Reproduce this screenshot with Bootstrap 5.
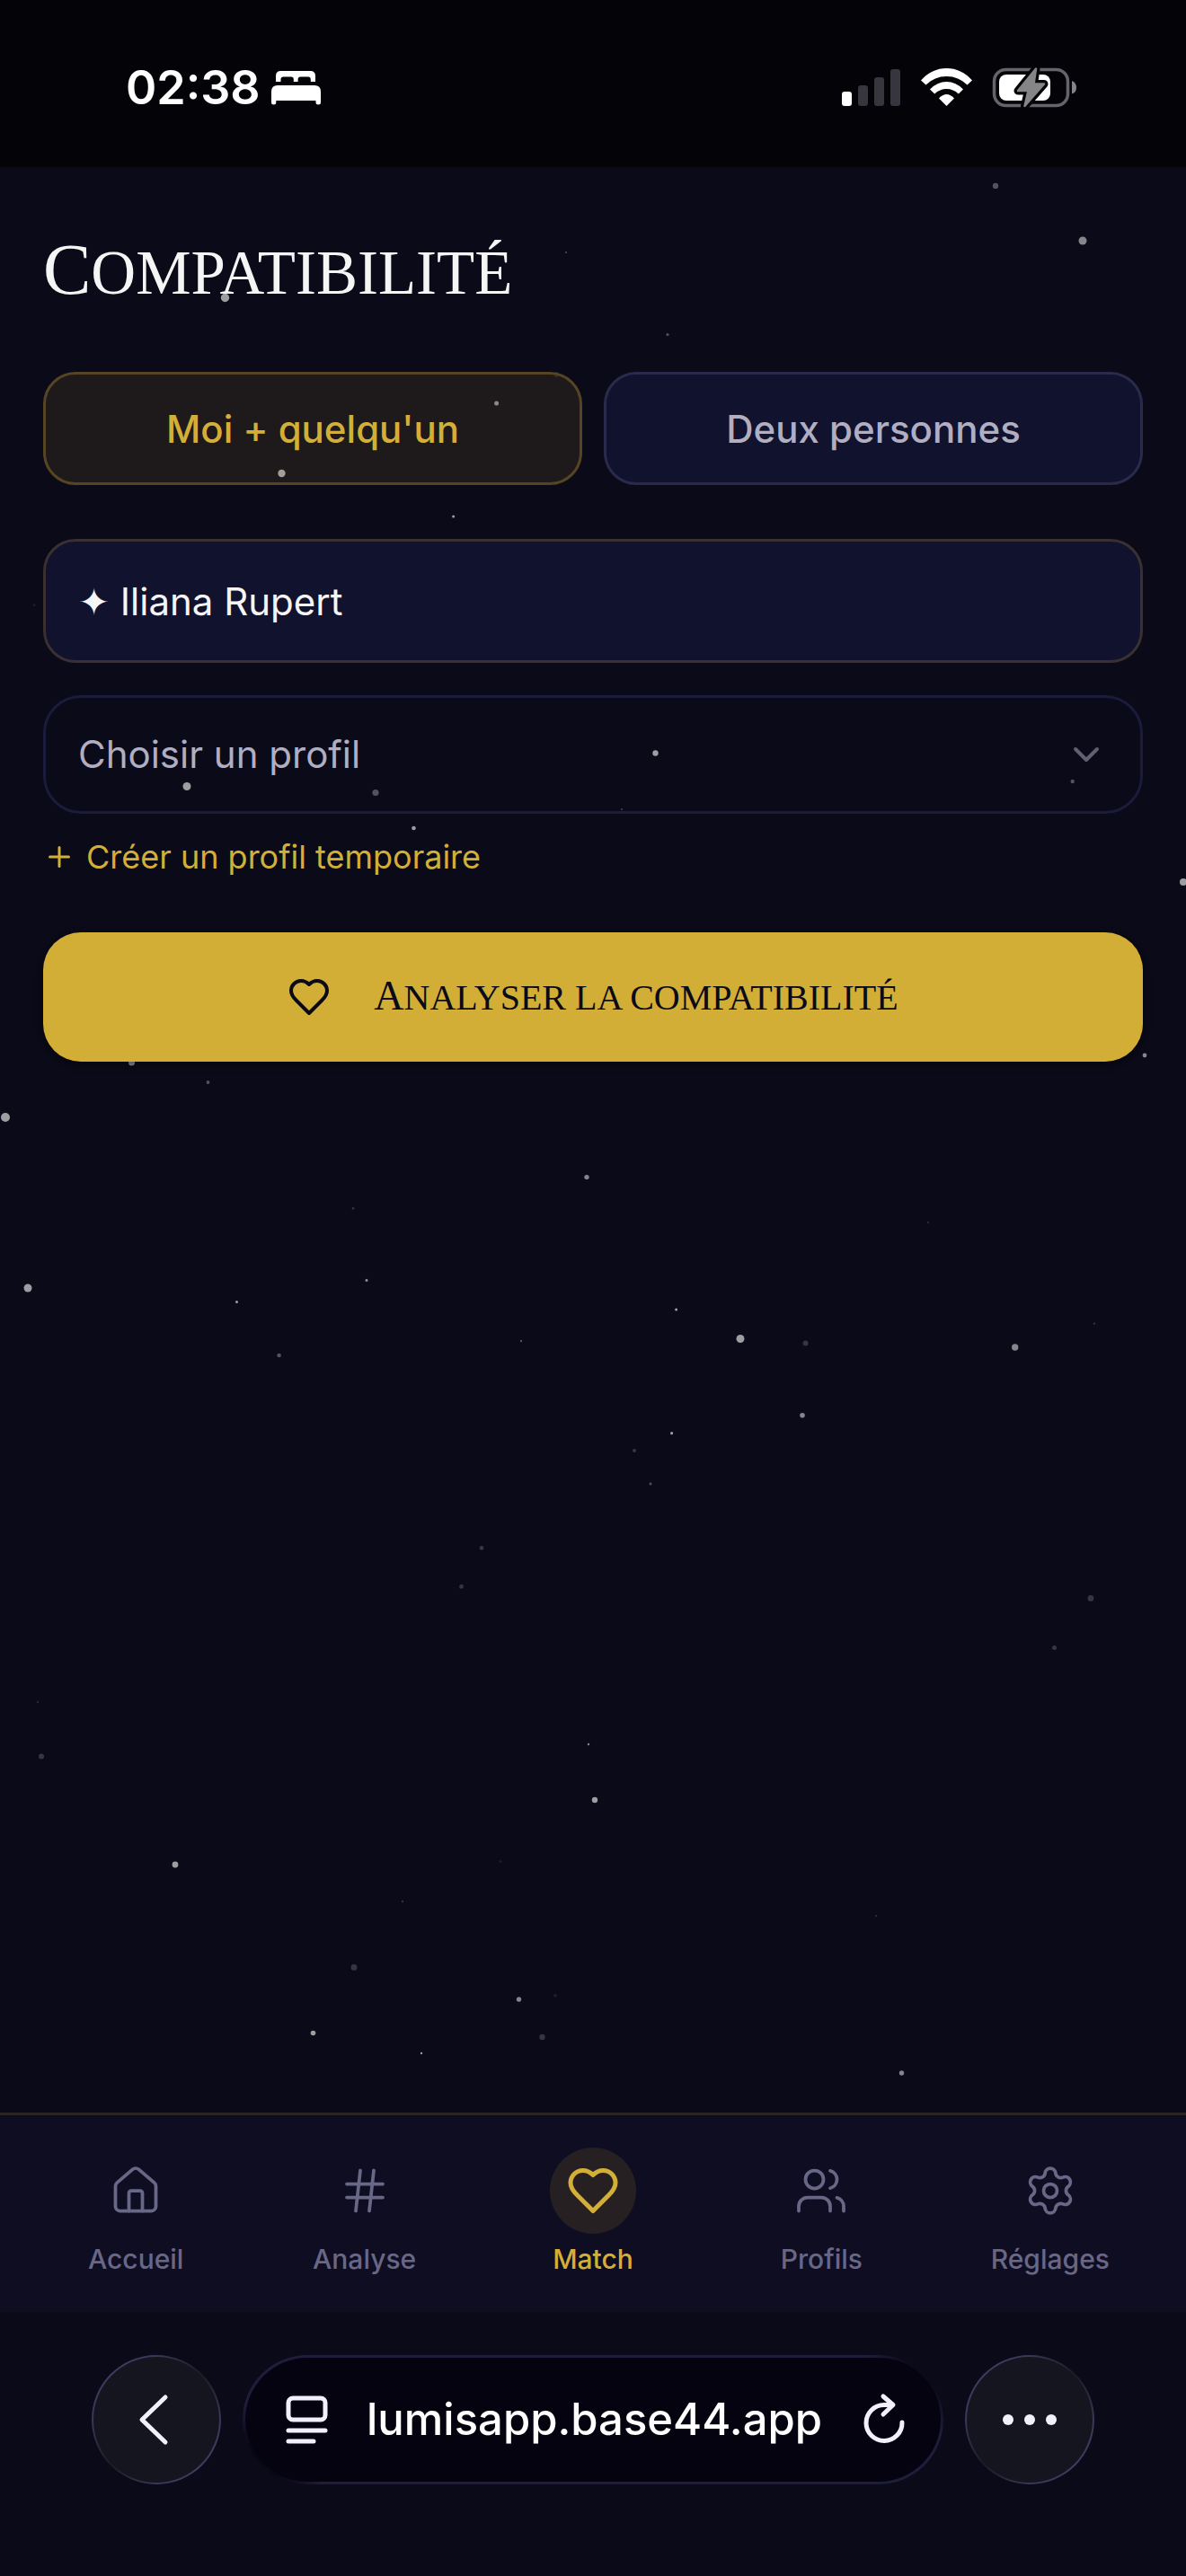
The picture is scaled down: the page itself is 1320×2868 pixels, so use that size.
<!DOCTYPE html>
<html lang="fr">
<head>
<meta charset="utf-8">
<meta name="viewport" content="width=device-width, initial-scale=1">
<title>Compatibilité</title>
<link href="https://cdn.jsdelivr.net/npm/bootstrap@5.3.0/dist/css/bootstrap.min.css" rel="stylesheet">
<style>
:root{--gold:#d4af37;--night:#0a0a18;--panel:#11122e;--muted:#696786;--soft:#b0aec0}
body{background:var(--night);color:#f5f5f5;font-family:Inter,"Liberation Sans",sans-serif;font-size:42px}
svg{display:block;flex:none}
.line-icon{fill:none;stroke:currentColor;stroke-linecap:round;stroke-linejoin:round}
.status-bar{height:186px;background:#030308;color:#fff;padding:10px 122px 0 140px}
.status-left{gap:12px}
.clock{font-size:52px;font-weight:600;line-height:64px}
.screen{padding:66px 48px}
.stars{position:absolute;inset:0;width:100%;height:100%;z-index:-1}
.engraved{font-family:"Liberation Serif",serif;font-weight:400;text-transform:uppercase}
.page-title{font-size:69px;line-height:96px;margin-bottom:62px}
.page-title::first-letter{font-size:80px}
.mode-btn{flex:1 1 0;height:126px;border:3px solid #2a2a4c;border-radius:36px;background:var(--panel);color:var(--soft);font-size:42px;font-weight:500}
.mode-btn.active,.mode-btn.active:hover{border-color:#564522;background:rgba(212,175,55,.1);color:var(--gold)}
.form-block{margin-top:60px}
.field{border:3px solid #3a3031;border-radius:36px;padding:0 36px;font-size:42px;line-height:60px;color:#f5f5f5}
.field:focus{box-shadow:none}
.field-me,.field-me:focus{height:138px;background:var(--panel);color:#f5f5f5}
.field-other,.field-other:focus{height:132px;margin-top:36px;border-color:#1b1b3d;border-radius:42px;color:var(--soft);background-color:transparent;background-image:url("data:image/svg+xml,%3Csvg xmlns='http://www.w3.org/2000/svg' viewBox='0 0 24 24' fill='none' stroke='%23625f72' stroke-width='2' stroke-linecap='round' stroke-linejoin='round'%3E%3Cpath d='m6 9 6 6 6-6'/%3E%3C/svg%3E");background-size:48px 48px;background-position:right 36px center}
.add-link{color:var(--gold);font-size:36px;line-height:48px;text-decoration:none;margin:24px 0 60px;gap:12px}
.cta,.cta:hover{height:144px;border:0;border-radius:42px;background:#d2ae36;color:var(--night);font-size:40px;line-height:48px;gap:48px;box-shadow:0 3px 9px rgba(0,0,0,.4)}
.cta-text::first-letter{font-size:46px}
.tab-bar{height:222px;border-top:3px solid #2a2524;background:#0f0d22;padding:36px 24px 0}
.tab-item{flex:1 1 0;gap:8px;color:var(--muted);font-size:30px;font-weight:500;line-height:40px;text-decoration:none}
.tab-item.active{color:var(--gold)}
.tab-disc{width:96px;height:96px;border-radius:50%}
.active .tab-disc{background:#272022}
.browser-bar{height:294px;padding:48px 102px 0;gap:24px}
.round-btn{flex:none;width:144px;height:144px;padding:0;border:2px solid transparent;border-radius:50%;color:#f2f0fc;background:linear-gradient(#15151f,#15151f) padding-box,linear-gradient(135deg,#45436c,#3a3858 25%,#1b1b26 50%,#3a3858 75%,#45436c) border-box}
.url-pill{height:144px;min-width:0;gap:42px;border:3px solid transparent;border-radius:72px;padding:0 39px 0 45px;background:linear-gradient(#04030f,#04030f) padding-box,radial-gradient(circle at 20px 124px,#06051280 0 20px,transparent 70px) border-box,radial-gradient(circle at calc(100% - 20px) 20px,#0a0a18 0 20px,transparent 70px) border-box,radial-gradient(circle at 20px 124px,#0a0a18 0 20px,transparent 70px) border-box,linear-gradient(#1f1d3c,#1f1d3c) border-box}
.plain-btn{flex:none;background:none;border:0;padding:0;color:#f2f0fc}
.url-text{flex:1 1 0;min-width:0;background:none;border:0;outline:0;padding:0;color:#fff;font-size:49px;font-weight:500;line-height:64px}
</style>
<script src="https://cdn.jsdelivr.net/npm/bootstrap@5.3.0/dist/js/bootstrap.bundle.min.js" defer></script>
</head>
<body class="d-flex flex-column min-vh-100">

<header class="status-bar d-flex justify-content-between align-items-center">
  <div class="status-left d-flex align-items-center">
    <span class="clock">02:38</span>
    <svg width="56" height="38" viewBox="0 0 56 38" fill="#fff" aria-label="Sommeil" role="img">
      <path d="M5 12V5.500Q5 0 10.500 0H43.500Q49 0 49 5.500V12H43.800V9.500Q43.800 6.500 41 6.500H32.500Q29.600 6.500 29.600 9.500V12H24.800V9.500Q24.800 6.500 22 6.500H13.500Q10.500 6.500 10.500 9.500V12Z"/>
      <path d="M0 23Q0 16 7 16H48Q55 16 55 23V35Q55 37.500 52.200 37.500Q49.500 37.500 49.500 35V33H5.300V35Q5.300 37.500 2.600 37.500Q0 37.500 0 35Z"/>
    </svg>
  </div>
  <svg width="262" height="46" viewBox="0 0 262 46" role="img" aria-label="Réseau, Wi-Fi et batterie">
    <rect x="1" y="27" width="11" height="16" rx="3" fill="#fff"/>
    <g fill="#37353d"><rect x="19" y="20" width="11" height="23" rx="3"/><rect x="37" y="11" width="11" height="32" rx="3"/><rect x="55" y="2" width="11" height="41" rx="3"/></g>
    <g fill="#fff">
      <path d="M89 14.500Q101 1 117.500 1T146 14.500L140.500 19.500Q131 10 117.500 10T94.500 19.500Z"/>
      <path d="M99 24.500Q107 16 117.500 16T136 24.500L130.800 29.500Q125 24 117.500 24T104.200 29.500Z"/>
      <path d="M109 34.500Q113 30 117.500 30T126 34.500L117.500 43Z"/>
    </g>
    <rect x="170.500" y="2.500" width="82" height="40" rx="13" fill="none" stroke="#66646a" stroke-width="3.500"/>
    <path d="M257 15Q262 17 262 22.500T257 29.500Z" fill="#858489"/>
    <rect x="176" y="8" width="57" height="29" rx="8" fill="#fff"/>
    <path d="M217 1.500L197 26H208.500L204.500 43L226 18.500H214.500Z" fill="#8b8a8e" stroke="#030308" stroke-width="9" stroke-linejoin="round"/>
    <path d="M217 1.500L197 26H208.500L204.500 43L226 18.500H214.500Z" fill="#858487" stroke="#858487" stroke-width="2.500" stroke-linejoin="round"/>
  </svg>
</header>

<main class="screen position-relative z-0 flex-grow-1">
  <svg class="stars" viewBox="0 186 1320 2166" preserveAspectRatio="xMidYMin slice" fill="#fff" aria-hidden="true">
    <g opacity=".6"><circle cx="250.500" cy="331.500" r="4.700"/><circle cx="208" cy="875.500" r="4.500"/><circle cx="1317" cy="982" r="4"/><circle cx="6" cy="1244" r="5"/><circle cx="31" cy="1434" r="4.500"/><circle cx="824" cy="1490.500" r="4.500"/><circle cx="729.500" cy="838.500" r="3.200"/><circle cx="662" cy="2004" r="3.200"/><circle cx="195" cy="2076" r="3.400"/><circle cx="348.500" cy="2263.500" r="2.800"/><circle cx="460.500" cy="922" r="2.300"/><circle cx="504.600" cy="575" r="1.500"/><circle cx="263.500" cy="1449.500" r="1.500"/><circle cx="752.600" cy="1458" r="1.500"/><circle cx="747.600" cy="1595.700" r="1.600"/><circle cx="469" cy="2286" r="1.200"/><circle cx="313.500" cy="527" r="4.200"/></g>
    <g opacity=".5"><circle cx="1205" cy="268" r="4.500"/><circle cx="146.500" cy="1183" r="3.500"/><circle cx="1274" cy="1175" r="2.400"/><circle cx="653" cy="1310.600" r="2.700"/><circle cx="1129.700" cy="1500" r="3.700"/><circle cx="893" cy="1575.800" r="2.800"/><circle cx="577.500" cy="2226" r="2.700"/><circle cx="1003.500" cy="2308" r="2.700"/><circle cx="408" cy="1425.400" r="1.600"/><circle cx="655" cy="1942" r="1.200"/><circle cx="552.600" cy="449" r="2.500"/></g>
    <g opacity=".3"><circle cx="1108" cy="207" r="3.200"/><circle cx="743" cy="372.500" r="1.600"/><circle cx="630" cy="281" r="1"/><circle cx="418" cy="882.500" r="3.600"/><circle cx="1193.700" cy="870" r="2.200"/><circle cx="580" cy="1493" r="1.200"/><circle cx="724" cy="1652" r="1.500"/><circle cx="231.500" cy="1205" r="1.900"/><circle cx="310.600" cy="1509" r="2.300"/></g>
    <g opacity=".18"><circle cx="1214" cy="1779.400" r="3.400"/><circle cx="1173.500" cy="1834.500" r="2.500"/><circle cx="394" cy="2190.400" r="3.400"/><circle cx="603.500" cy="2268" r="3.200"/><circle cx="46" cy="1955.600" r="3"/><circle cx="513.500" cy="1766.400" r="2.400"/><circle cx="536" cy="1723.500" r="2.400"/><circle cx="706" cy="1615" r="2"/><circle cx="896.600" cy="1495.400" r="3"/><circle cx="1218" cy="1473.600" r="1.200"/><circle cx="393" cy="1345.400" r="1.300"/><circle cx="1033" cy="1361" r="1"/><circle cx="692" cy="901" r="1.200"/><circle cx="448" cy="2117" r="1.200"/><circle cx="975" cy="2133" r="1"/><circle cx="42" cy="1895" r="1"/></g>
    <g opacity=".08"><circle cx="619.500" cy="417" r="3"/><circle cx="38" cy="673.500" r="1.600"/><circle cx="557" cy="2072.600" r="1.500"/><circle cx="618" cy="2221.700" r="2"/></g>
  </svg>

  <h1 class="page-title engraved">Compatibilité</h1>

  <div class="d-flex gap-4" role="group" aria-label="Mode">
    <button type="button" class="btn mode-btn active" aria-pressed="true">Moi + quelqu'un</button>
    <button type="button" class="btn mode-btn" aria-pressed="false">Deux personnes</button>
  </div>

  <form class="form-block">
    <input class="form-control field field-me" type="text" value="✦ Iliana Rupert" aria-label="Mon profil" readonly>
    <select class="form-select field field-other" aria-label="Profil à comparer">
      <option selected>Choisir un profil</option>
    </select>
    <a href="#" class="add-link d-inline-flex align-items-center">
      <svg class="line-icon" width="36" height="36" viewBox="0 0 24 24" stroke-width="2"><path d="M5 12h14M12 5v14"/></svg>
      Créer un profil temporaire
    </a>
    <button type="button" class="btn cta w-100 d-flex align-items-center justify-content-center">
      <svg class="line-icon" width="48" height="48" viewBox="0 0 24 24" stroke-width="2"><path d="M19 14c1.490-1.460 3-3.210 3-5.500A5.500 5.500 0 0 0 16.500 3c-1.760 0-3 .5-4.500 2-1.500-1.500-2.740-2-4.500-2A5.500 5.500 0 0 0 2 8.500c0 2.300 1.500 4.050 3 5.500l7 7Z"/></svg>
      <span class="cta-text engraved d-block">Analyser la compatibilité</span>
    </button>
  </form>
</main>

<nav class="tab-bar d-flex" aria-label="Navigation">
  <a href="#" class="tab-item d-flex flex-column align-items-center">
    <span class="tab-disc d-flex align-items-center justify-content-center"><svg class="line-icon" width="60" height="60" viewBox="0 0 24 24" stroke-width="1.500"><path d="M15 21v-8a1 1 0 0 0-1-1h-4a1 1 0 0 0-1 1v8"/><path d="M3 10a2 2 0 0 1 .709-1.528l7-5.999a2 2 0 0 1 2.582 0l7 5.999A2 2 0 0 1 21 10v9a2 2 0 0 1-2 2H5a2 2 0 0 1-2-2z"/></svg></span>
    Accueil
  </a>
  <a href="#" class="tab-item d-flex flex-column align-items-center">
    <span class="tab-disc d-flex align-items-center justify-content-center"><svg class="line-icon" width="60" height="60" viewBox="0 0 24 24" stroke-width="1.500"><path d="M4 9h16M4 15h16M10 3 8 21M16 3l-2 18"/></svg></span>
    Analyse
  </a>
  <a href="#" class="tab-item active d-flex flex-column align-items-center" aria-current="page">
    <span class="tab-disc d-flex align-items-center justify-content-center"><svg class="line-icon" width="60" height="60" viewBox="0 0 24 24" stroke-width="2"><path d="M19 14c1.490-1.460 3-3.210 3-5.500A5.500 5.500 0 0 0 16.500 3c-1.760 0-3 .5-4.500 2-1.500-1.500-2.740-2-4.500-2A5.500 5.500 0 0 0 2 8.500c0 2.300 1.500 4.050 3 5.500l7 7Z"/></svg></span>
    Match
  </a>
  <a href="#" class="tab-item d-flex flex-column align-items-center">
    <span class="tab-disc d-flex align-items-center justify-content-center"><svg class="line-icon" width="60" height="60" viewBox="0 0 24 24" stroke-width="1.500"><path d="M16 21v-2a4 4 0 0 0-4-4H6a4 4 0 0 0-4 4v2"/><circle cx="9" cy="7" r="4"/><path d="M22 21v-2a4 4 0 0 0-3-3.870M16 3.130a4 4 0 0 1 0 7.750"/></svg></span>
    Profils
  </a>
  <a href="#" class="tab-item d-flex flex-column align-items-center">
    <span class="tab-disc d-flex align-items-center justify-content-center"><svg class="line-icon" width="60" height="60" viewBox="0 0 24 24" stroke-width="1.500"><path d="M9.671 4.136a2.340 2.340 0 0 1 4.659 0 2.340 2.340 0 0 0 3.319 1.915 2.340 2.340 0 0 1 2.330 4.033 2.340 2.340 0 0 0 0 3.831 2.340 2.340 0 0 1-2.330 4.033 2.340 2.340 0 0 0-3.319 1.915 2.340 2.340 0 0 1-4.659 0 2.340 2.340 0 0 0-3.320-1.915 2.340 2.340 0 0 1-2.330-4.033 2.340 2.340 0 0 0 0-3.831A2.340 2.340 0 0 1 6.350 6.051a2.340 2.340 0 0 0 3.319-1.915"/><circle cx="12" cy="12" r="3"/></svg></span>
    Réglages
  </a>
</nav>

<footer class="browser-bar d-flex">
  <button type="button" class="round-btn d-flex align-items-center justify-content-center" aria-label="Retour">
    <svg class="line-icon" width="40" height="60" viewBox="0 0 40 60" stroke-width="5"><path d="M30 5 4 30l26 25"/></svg>
  </button>
  <div class="url-pill d-flex flex-grow-1 align-items-center">
    <button type="button" class="plain-btn" aria-label="Affichage de la page">
      <svg class="line-icon" width="48" height="56" viewBox="0 0 48 56" stroke-width="5"><rect x="3" y="4" width="41" height="24" rx="5"/><path d="M3 40h41M3 52h28"/></svg>
    </button>
    <input class="url-text" type="text" value="lumisapp.base44.app" aria-label="Adresse">
    <button type="button" class="plain-btn" aria-label="Recharger">
      <svg class="line-icon" width="48" height="60" viewBox="0 0 48 60" stroke-width="5"><path d="M33 13.500H24A20 20 0 1 0 44 33M23 4l11 9.500L23 24"/></svg>
    </button>
  </div>
  <button type="button" class="round-btn d-flex align-items-center justify-content-center" aria-label="Plus">
    <svg width="60" height="12" viewBox="0 0 60 12" fill="currentColor"><circle cx="6" cy="6" r="6"/><circle cx="30" cy="6" r="6"/><circle cx="54" cy="6" r="6"/></svg>
  </button>
</footer>
</body>
</html>
